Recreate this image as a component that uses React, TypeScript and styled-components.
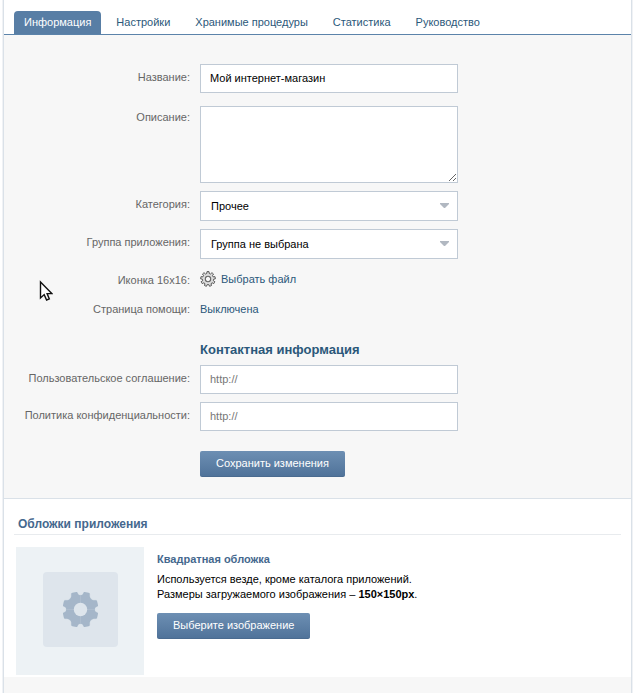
import React from "react";
import styled, { createGlobalStyle, css } from "styled-components";

const GlobalStyle = createGlobalStyle`
  * { box-sizing: border-box; }
  body {
    margin: 0;
    background: #fff;
    color: #000;
    font-family: "Liberation Sans", Arial, sans-serif;
    font-size: 11px;
    line-height: 15px;
  }
  a { color: #2b587a; text-decoration: none; }
`;

const Page = styled.div`
  display: flex;
  flex-direction: column;
  min-height: 100vh;
  margin: 0 3px;
  border: solid #dae1e8;
  border-width: 0 1px;
  background: #f7f7f7;
  box-shadow: 0 0 0 1px #f0f2f5;
`;

const TabBar = styled.nav`
  display: flex;
  gap: 5px;
  padding: 11px 10px 0;
  background: #fff;
  border-bottom: 1px solid #5b83aa;
`;

const Tab = styled.a<{ $active?: boolean }>`
  padding: 4px 10px;
  border-radius: 4px 4px 0 0;
  ${(p) =>
    p.$active &&
    css`
      background: #587ea5;
      color: #fff;
    `}
`;

const Form = styled.form`
  display: flex;
  flex-direction: column;
  gap: 8px;
  padding: 29px 10px 21px;
  border-bottom: 1px solid #dae1e8;
`;

const Row = styled.div<{ $space?: number }>`
  display: grid;
  grid-template-columns: 176px minmax(0, 258px);
  column-gap: 10px;
  align-items: start;
  margin-top: ${(p) => p.$space ?? 0}px;
`;

const Label = styled.label<{ $top?: number }>`
  padding-top: ${(p) => p.$top ?? 6}px;
  color: #666;
  text-align: right;
  white-space: nowrap;
`;

const field = css`
  display: block;
  width: 100%;
  margin: 0;
  border: 1px solid #c0cad5;
  border-radius: 0;
  background: #fff;
  color: #000;
  font: inherit;
  outline: none;
`;

const Input = styled.input`
  ${field}
  height: 29px;
  padding: 0 9px 1px;
  &::placeholder { color: #777; opacity: 1; }
`;

const TextArea = styled.textarea`
  ${field}
  height: 77px;
  padding: 6px 9px;
  resize: both;
`;

const SelectBox = styled.div`
  display: grid;
  align-items: center;
  > * { grid-area: 1 / 1; }
`;

const Select = styled.select`
  ${field}
  height: 30px;
  padding: 0 28px 0 10px;
  appearance: none;
`;

const Arrow = styled.svg`
  justify-self: end;
  margin: 0 9px 2px 0;
  pointer-events: none;
`;

const FileLink = styled.a`
  display: flex;
  align-items: center;
  gap: 5px;
`;

const ContactTitle = styled.h2`
  grid-column: 2;
  margin: 0;
  color: #2b587a;
  font-size: 13px;
  line-height: 15px;
`;

const Button = styled.button`
  grid-column: 2;
  justify-self: start;
  height: 26px;
  padding: 0 16px 1px;
  border: 0;
  border-bottom: 1px solid #4a6b90;
  border-radius: 2px;
  background: linear-gradient(#6d8fb3, #50739a);
  color: #fff;
  font: inherit;
  white-space: nowrap;
  cursor: pointer;
`;

const Covers = styled.section`
  padding: 18px 10px 2px;
  background: #fff;
`;

const CoversTitle = styled.h2`
  margin: 0 0 12px;
  padding: 0 4px 2px;
  border-bottom: 1px solid #e8ebee;
  color: #45688e;
  font-size: 12px;
  line-height: 15px;
`;

const Cover = styled.div`
  display: flex;
  gap: 13px;
  padding-left: 2px;
`;

const Preview = styled.div`
  display: grid;
  flex: none;
  place-items: center;
  width: 128px;
  height: 128px;
  padding: 0 0 3px 1px;
  background: #edf2f5;
`;

const PreviewTile = styled.div`
  display: grid;
  place-items: center;
  width: 75px;
  height: 75px;
  border-radius: 4px;
  background: #dee5ec;
`;

const CoverInfo = styled.div`
  padding-top: 5px;
`;

const CoverTitle = styled.h3`
  margin: 0 0 5px;
  color: #45688e;
  font-size: 11px;
  line-height: 15px;
`;

const CoverText = styled.p`
  margin: 0 0 11px;
`;

const Cursor = styled.svg`
  position: absolute;
  left: 39px;
  top: 280px;
  pointer-events: none;
`;

const gearPath = (teeth: number, outer: number, inner: number, topHalf: number, baseHalf: number) => {
  const step = (Math.PI * 2) / teeth;
  const at = (r: number, a: number) => `${(r * Math.sin(a)).toFixed(2)} ${(-r * Math.cos(a)).toFixed(2)}`;
  let d = "";
  for (let i = 0; i < teeth; i++) {
    const a = i * step;
    d += `${i ? "L" : "M"}${at(inner, a - baseHalf)}L${at(outer, a - topHalf)}A${outer} ${outer} 0 0 1 ${at(outer, a + topHalf)}L${at(inner, a + baseHalf)}`;
  }
  return d + "Z";
};

const SmallGear = () => (
  <svg width="16" height="16" viewBox="-8 -8 16 16" aria-hidden="true">
    <path d={gearPath(9, 7.4, 5.6, 0.14, 0.22)} fill="#dcdcdc" stroke="#555" strokeWidth="1" strokeLinejoin="round" />
    <circle r="2.7" fill="#f7f7f7" stroke="#666" strokeWidth="1.1" />
  </svg>
);

const gearQuarter =
  "M0 0V-14.3Q1.8 -14.3 2.3 -15.2L3.2 -17Q3.5 -17.6 4.2 -17.5L8.6 -16.4Q9.2 -16.2 9.2 -15.5V-13.2Q9.3 -12 10.6 -10.6Q12 -9.3 13.2 -9.2H15.5Q16.2 -9.2 16.4 -8.6L17.5 -4.2Q17.6 -3.5 17 -3.2L15.2 -2.3Q14.3 -1.8 14.3 0Z";

const LargeGear = () => (
  <svg width="35" height="35" viewBox="-17.5 -17.5 35 35" aria-hidden="true">
    {[0, 90, 180, 270].map((angle) => (
      <path
        key={angle}
        d={gearQuarter}
        transform={`rotate(${angle})`}
        fill="#a5b6c9"
        stroke="#a5b6c9"
        strokeWidth="0.2"
      />
    ))}
    <circle r="6.7" fill="#dee5ec" />
  </svg>
);

const DropDown = ({ id, value }: { id: string; value: string }) => (
  <SelectBox>
    <Select id={id} defaultValue={value}>
      <option>{value}</option>
    </Select>
    <Arrow width="9" height="5" viewBox="0 0 9 5" aria-hidden="true">
      <path d="M0 0H9V1L5 5H4L0 1Z" fill="#b1b8c1" />
    </Arrow>
  </SelectBox>
);

const tabs = ["Информация", "Настройки", "Хранимые процедуры", "Статистика", "Руководство"];

export default function App() {
  return (
    <>
      <GlobalStyle />
      <Page>
        <TabBar>
          {tabs.map((name, i) => (
            <Tab key={name} href="#" $active={i === 0}>{name}</Tab>
          ))}
        </TabBar>
        <Form onSubmit={(e) => e.preventDefault()}>
          <Row>
            <Label htmlFor="title">Название:</Label>
            <Input id="title" defaultValue="Мой интернет-магазин" />
          </Row>
          <Row $space={5}>
            <Label htmlFor="description" $top={4}>Описание:</Label>
            <TextArea id="description" />
          </Row>
          <Row>
            <Label htmlFor="category">Категория:</Label>
            <DropDown id="category" value="Прочее" />
          </Row>
          <Row>
            <Label htmlFor="group">Группа приложения:</Label>
            <DropDown id="group" value="Группа не выбрана" />
          </Row>
          <Row $space={4}>
            <Label as="span" $top={2}>Иконка 16x16:</Label>
            <FileLink href="#"><SmallGear />Выбрать файл</FileLink>
          </Row>
          <Row $space={6}>
            <Label as="span" $top={0}>Страница помощи:</Label>
            <a href="#">Выключена</a>
          </Row>
          <Row $space={17}>
            <ContactTitle>Контактная информация</ContactTitle>
          </Row>
          <Row>
            <Label htmlFor="agreement">Пользовательское соглашение:</Label>
            <Input id="agreement" placeholder="http://" />
          </Row>
          <Row>
            <Label htmlFor="privacy">Политика конфиденциальности:</Label>
            <Input id="privacy" placeholder="http://" />
          </Row>
          <Row $space={12}>
            <Button type="submit">Сохранить изменения</Button>
          </Row>
        </Form>
        <Covers>
          <CoversTitle>Обложки приложения</CoversTitle>
          <Cover>
            <Preview>
              <PreviewTile><LargeGear /></PreviewTile>
            </Preview>
            <CoverInfo>
              <CoverTitle>Квадратная обложка</CoverTitle>
              <CoverText>
                Используется везде, кроме каталога приложений.
                <br />
                Размеры загружаемого изображения – <b>150×150px</b>.
              </CoverText>
              <Button type="button">Выберите изображение</Button>
            </CoverInfo>
          </Cover>
        </Covers>
      </Page>
      <Cursor width="14" height="22" viewBox="0 0 14 22" aria-hidden="true">
        <path d="M1.5 2V18L5.2 14.6L7.6 20L10.3 18.9L8.1 13.6H12.8Z" fill="#fff" stroke="#111" strokeWidth="1.4" />
      </Cursor>
    </>
  );
}
